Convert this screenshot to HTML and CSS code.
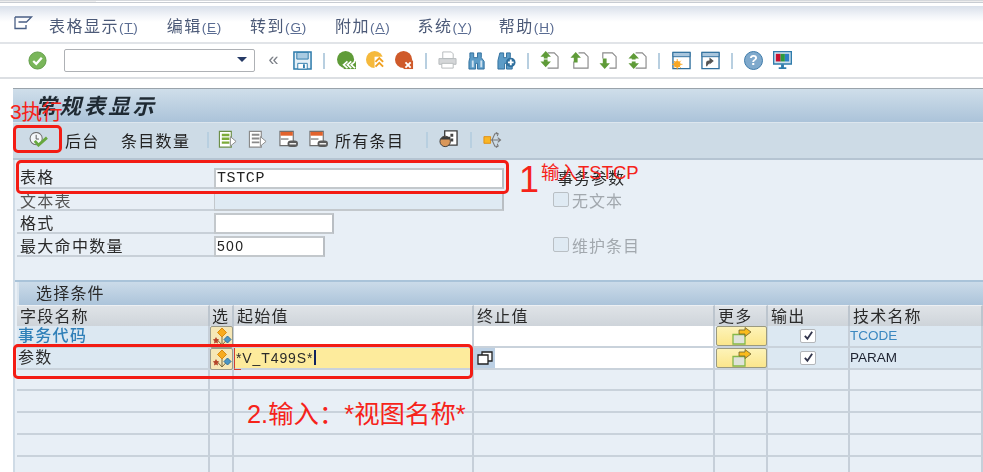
FILE: index.html
```html
<!DOCTYPE html>
<html lang="zh">
<head>
<meta charset="utf-8">
<title>常规表显示</title>
<link rel="stylesheet" href="styles.css">
</head>
<body>
<svg class="defs" width="0" height="0" aria-hidden="true">
  <symbol id="i-menu" viewBox="0 0 20 14"><path d="M1.500 1v11.500h11V9M1.500 1H18l-5 5H5" fill="none" stroke="#4a5f85" stroke-width="1.300"/></symbol>
  <symbol id="i-ok" viewBox="0 0 20 20"><circle cx="10" cy="10" r="9" fill="#79b65a" stroke="#5d9a43"/><path d="M5.500 10.500l3.200 3L14.500 7" fill="none" stroke="#fff" stroke-width="2.400"/></symbol>
  <symbol id="i-save" viewBox="0 0 20 20"><path d="M1 1h18v18H1z" fill="#e6f0f7" stroke="#2f7cac" stroke-width="1.600"/><path d="M4 1.500h12v7H4z" fill="#a9cbe2" stroke="#2f7cac"/><path d="M5 13h10v6H5z" fill="#fff" stroke="#2f7cac"/><path d="M11.500 14v4" stroke="#2f7cac" stroke-width="2"/></symbol>
  <symbol id="i-back" viewBox="0 0 20 20"><circle cx="9" cy="9" r="9" fill="#5f9b38"/><path d="M7 11h13v8H7z" fill="#5f9b38"/><path d="M11 11l-4 3.500 4 3.500M15 11l-4 3.500 4 3.500M19 11l-4 3.500 4 3.500" fill="none" stroke="#fff" stroke-width="1.800"/></symbol>
  <symbol id="i-up" viewBox="0 0 20 20"><circle cx="9" cy="9" r="9" fill="#f5b93c"/><path d="M9 6h10v13H9z" fill="#fff"/><path d="M10 11.500l4-4 4 4M10 16.500l4-4 4 4" fill="none" stroke="#f0a020" stroke-width="2"/></symbol>
  <symbol id="i-x" viewBox="0 0 20 20"><circle cx="9" cy="9" r="9" fill="#cf5a2a"/><path d="M9 10h10v9H9z" fill="#cf5a2a"/><path d="M11 12l5.500 5.500M16.500 12L11 17.500" stroke="#fff" stroke-width="2"/></symbol>
  <symbol id="i-print" viewBox="0 0 20 20"><path d="M5 1h9l2 2v5H5z" fill="#fff" stroke="#b6babd"/><path d="M1 8h18v6H1z" fill="#d4d6d8" stroke="#b6babd"/><path d="M4 13h12v5H4z" fill="#fff" stroke="#b6babd"/></symbol>
  <symbol id="i-find" viewBox="0 0 20 20"><path d="M3 2h4v5h4V2h4v5l3 4v8h-7v-6H9v6H2v-8l1-4z" transform="translate(-1 0)" fill="#5d9cc7" stroke="#2f6f9d"/><path d="M5 10v7M14 10v7" stroke="#cde1f0" stroke-width="2"/></symbol>
  <symbol id="i-findp" viewBox="0 0 20 20"><path d="M3 2h4v5h3V2h4v5l2 3v9h-6v-6H8v6H1v-9z" fill="#5d9cc7" stroke="#2f6f9d"/><circle cx="14.500" cy="12" r="5" fill="#2f6f9d"/><path d="M14.500 9v6M11.500 12h6" stroke="#fff" stroke-width="2"/></symbol>
  <symbol id="i-first" viewBox="0 0 20 20"><path d="M8 2h7l4 4v12H8" fill="#fff" stroke="#8a8a8a" stroke-width="1.200"/><path d="M6 0l5.500 6H8v2H4V6H.500z" fill="#5f9b38"/><path d="M6 17l5.500-6H8V9H4v2H.500z" fill="#5f9b38"/></symbol>
  <symbol id="i-prev" viewBox="0 0 20 20"><path d="M9 2h6l4 4v12H4v-7" fill="#fff" stroke="#8a8a8a" stroke-width="1.200"/><path d="M6 1l5.500 6H8v5H4V7H.500z" fill="#5f9b38"/></symbol>
  <symbol id="i-next" viewBox="0 0 20 20"><path d="M4 8V2h10l4 4v12h-7" fill="#fff" stroke="#8a8a8a" stroke-width="1.200"/><path d="M6 19l5.500-6H8V8H4v5H.500z" fill="#5f9b38"/></symbol>
  <symbol id="i-last" viewBox="0 0 20 20"><path d="M8 2h7l4 4v12H8" fill="#fff" stroke="#8a8a8a" stroke-width="1.200"/><path d="M6 2l5.500 6H8v1H4V8H.500z" fill="#5f9b38"/><path d="M6 19l5.500-6H8v-2H4v2H.500z" fill="#5f9b38"/></symbol>
  <symbol id="i-new" viewBox="0 0 20 20"><path d="M1 1.500h18v17H1z" fill="#fff" stroke="#2f6f9d" stroke-width="1.400"/><path d="M1 1.500h18V6H1z" fill="#a9c6dd" stroke="#2f6f9d"/><circle cx="5.500" cy="14" r="3.500" fill="#f9a825"/><path d="M5.500 8.500v11M0 14h11M1.800 10.300l7.400 7.400M9.200 10.300l-7.400 7.400" stroke="#f9a825"/></symbol>
  <symbol id="i-link" viewBox="0 0 20 20"><path d="M1 1.500h18v17H1z" fill="#fff" stroke="#2f6f9d" stroke-width="1.400"/><path d="M1 1.500h18V6H1z" fill="#a9c6dd" stroke="#2f6f9d"/><path d="M6 16v-3.500c0-1.500 1-2 2.500-2H11M9.500 8l3 2.500-3 2.500z" fill="#555" stroke="#555" stroke-width="1.200"/></symbol>
  <symbol id="i-mon" viewBox="0 0 20 20"><path d="M.700.700h18.600v13H.700z" fill="#cde0ee" stroke="#2f7cac" stroke-width="1.400"/><path d="M3 3h5v8H3z" fill="#c8102e"/><path d="M8 3h4.500v8H8z" fill="#2c9a3c"/><path d="M12.500 3H17v8h-4.500z" fill="#2c7fc4"/><path d="M8.500 14h3v3h-3zM6 17h8v2H6z" fill="#2f7cac"/></symbol>
  <symbol id="i-exec" viewBox="0 0 20 16"><circle cx="7.500" cy="7" r="6.500" fill="#f3f6f8" stroke="#6d6d6d" stroke-width="1.100"/><path d="M7.500 3v4.500h3" fill="none" stroke="#555"/><path d="M6 9.500l4 4.500L19 6" fill="none" stroke="#67a83d" stroke-width="3"/></symbol>
  <symbol id="i-selg" viewBox="0 0 20 20"><path d="M1.500 1.500H14V18H1.500z" fill="#fff" stroke="#8a8a8a" stroke-width="1.200"/><path d="M4 4h8v2H4zM4 8h8v2H4zM4 12h8v2H4z" fill="#8a8a8a"/><path d="M13 7l6 5-6 5z" fill="#fff" stroke="#8a8a8a"/></symbol>
  <symbol id="i-selc" viewBox="0 0 20 20"><path d="M1.500 1.500H14V18H1.500z" fill="#fff" stroke="#6d8f48" stroke-width="1.200"/><path d="M4 4h8v2.500H4zM4 8h8v2.500H4zM4 12h8v2.500H4z" fill="#7cab3a"/><path d="M13 7l6 5-6 5z" fill="#fff" stroke="#8a8a8a"/></symbol>
  <symbol id="i-rem" viewBox="0 0 20 20"><path d="M1 1.500h14v15H1z" fill="#fff" stroke="#6d6d6d" stroke-width="1.200"/><path d="M1.500 2h13v4h-13z" fill="#e2622c"/><path d="M2 9.500h8" stroke="#777" stroke-width="1.300"/><rect x="9" y="11" width="11" height="7" rx="3.500" fill="#5a5a5a"/><path d="M11 14.500h7" stroke="#fff" stroke-width="1.400"/></symbol>
  <symbol id="i-face" viewBox="0 0 20 20"><path d="M6 1h13v15H6z" fill="#fff" stroke="#3c3c3c" stroke-width="1.400"/><path d="M12 4h3v3h-3zM12 9h3v3h-3z" fill="#444"/><circle cx="6.500" cy="12" r="5.500" fill="#d9975a" stroke="#3c3c3c"/><path d="M1 10h11V7H4z" fill="#3c3c3c"/></symbol>
  <symbol id="i-tree" viewBox="0 0 20 20"><path d="M1 7h7v7H1z" fill="#f9b625" stroke="#e08e12"/><path d="M8 10.500h10M15.500 8l3 2.500-3 2.500M9.500 10.500l3-6.500h3M13.500 2.500l2.500 1.500-1 2.500M9.500 10.500l3 6.500h3M15 14.500l1 2.500-2.500 1.500" fill="none" stroke="#777" stroke-width="1.100"/></symbol>
  <symbol id="i-flower" viewBox="0 0 20 20"><path d="M10 18V8M4.500 12l5.500 6 5.500-6" fill="none" stroke="#7b6a3d"/><path d="M10 1l4.500 4.500L10 10 5.500 5.500z" fill="#f7ab1d" stroke="#d98a10"/><path d="M15.500 9l3.500 3.500-3.500 3.500-3.500-3.500z" fill="#4a96c4" stroke="#2f6f9d"/><path d="M4 10l1.100 2.100 2.100.400-1.600 1.600.400 2.300L4 15.400l-2 1 .400-2.300L.800 12.500l2.100-.400z" fill="#b4452a"/></symbol>
  <symbol id="i-more" viewBox="0 0 20 18"><path d="M1 7.500h12v9.500H1z" fill="#dfe3da" stroke="#86b84a" stroke-width="1.300"/><path d="M7 3h6V.500L19 5l-6 4.500V7H7z" fill="#f9bb1d" stroke="#6c6230" stroke-width=".800"/></symbol>
  <symbol id="i-multi" viewBox="0 0 16 14"><path d="M5 1h10v9H5z" fill="#fff" stroke="#222" stroke-width="1.300"/><path d="M1 4h10v9H1z" fill="#fff" stroke="#222" stroke-width="1.300"/></symbol>
  <symbol id="i-tick" viewBox="0 0 12 12"><path d="M2 6.500l2.800 3L10 2" fill="none" stroke="#33364d" stroke-width="2"/></symbol>
</svg>

<div class="top-strip"><span class="strip-tab"></span></div>

<nav class="menubar">
  <svg class="menu-icon"><use href="#i-menu"/></svg>
  <span class="menu-item m1">表格显示<small>(<u>T</u>)</small></span>
  <span class="menu-item m2">编辑<small>(<u>E</u>)</small></span>
  <span class="menu-item m3">转到<small>(<u>G</u>)</small></span>
  <span class="menu-item m4">附加<small>(<u>A</u>)</small></span>
  <span class="menu-item m5">系统<small>(<u>Y</u>)</small></span>
  <span class="menu-item m6">帮助<small>(<u>H</u>)</small></span>
</nav>

<div class="toolbar">
  <span class="tool"><svg class="ico"><use href="#i-ok"/></svg></span>
  <div class="combo"><span class="combo-arrow"></span></div>
  <span class="tool chev">«</span>
  <span class="tool"><svg class="ico"><use href="#i-save"/></svg></span>
  <span class="sep"></span>
  <span class="tool"><svg class="ico"><use href="#i-back"/></svg></span>
  <span class="tool"><svg class="ico"><use href="#i-up"/></svg></span>
  <span class="tool"><svg class="ico"><use href="#i-x"/></svg></span>
  <span class="sep"></span>
  <span class="tool"><svg class="ico"><use href="#i-print"/></svg></span>
  <span class="tool"><svg class="ico"><use href="#i-find"/></svg></span>
  <span class="tool"><svg class="ico"><use href="#i-findp"/></svg></span>
  <span class="sep"></span>
  <span class="tool"><svg class="ico"><use href="#i-first"/></svg></span>
  <span class="tool"><svg class="ico"><use href="#i-prev"/></svg></span>
  <span class="tool"><svg class="ico"><use href="#i-next"/></svg></span>
  <span class="tool"><svg class="ico"><use href="#i-last"/></svg></span>
  <span class="sep"></span>
  <span class="tool"><svg class="ico"><use href="#i-new"/></svg></span>
  <span class="tool"><svg class="ico"><use href="#i-link"/></svg></span>
  <span class="sep"></span>
  <span class="tool help">?</span>
  <span class="tool"><svg class="ico"><use href="#i-mon"/></svg></span>
</div>

<main class="panel">
  <header class="titlebar"><h1>常规表显示</h1></header>

  <div class="appbar">
    <span class="app-exec"><svg class="ico"><use href="#i-exec"/></svg></span>
    <span class="app-text a-bg">后台</span>
    <span class="app-text a-count">条目数量</span>
    <span class="sep a-sep1"></span>
    <span class="tool"><svg class="ico"><use href="#i-selc"/></svg></span>
    <span class="tool a-nar"><svg class="ico"><use href="#i-selg"/></svg></span>
    <span class="tool a-nar"><svg class="ico"><use href="#i-rem"/></svg></span>
    <span class="tool a-nar"><svg class="ico"><use href="#i-rem"/></svg></span>
    <span class="app-text a-all">所有条目</span>
    <span class="sep a-sep2"></span>
    <span class="tool"><svg class="ico"><use href="#i-face"/></svg></span>
    <span class="sep"></span>
    <span class="tool"><svg class="ico"><use href="#i-tree"/></svg></span>
  </div>

  <section class="form">
    <div class="form-left">
      <div class="form-row r1"><label>表格</label><div class="field f-wide mono">TSTCP</div></div>
      <div class="form-row r2"><label>文本表</label><div class="field f-wide f-off"></div></div>
      <div class="form-row r3"><label>格式</label><div class="field f-fmt"></div></div>
      <div class="form-row r4"><label>最大命中数量</label><div class="field f-max sans">500</div></div>
    </div>
    <div class="form-right">
      <div class="side-row side-title">事务参数</div>
      <div class="side-row off"><span class="box"></span>无文本</div>
      <div class="side-row"></div>
      <div class="side-row off"><span class="box"></span>维护条目</div>
    </div>
  </section>

  <section class="select">
    <h2>选择条件</h2>
    <div class="grid">
      <div class="hc">字段名称</div><div class="hc">选</div><div class="hc">起始值</div><div class="hc">终止值</div><div class="hc">更多</div><div class="hc">输出</div><div class="hc">技术名称</div>

      <div class="c c-key link">事务代码</div>
      <div class="c c-btn"><span class="sel-btn"><svg class="flower"><use href="#i-flower"/></svg></span></div>
      <div class="c c-white"></div>
      <div class="c c-white"></div>
      <div class="c c-btn"><span class="more-btn"><svg class="more"><use href="#i-more"/></svg></span></div>
      <div class="c c-key c-center"><span class="check"><svg class="tick"><use href="#i-tick"/></svg></span></div>
      <div class="c c-key tech link">TCODE</div>

      <div class="c c-key">参数</div>
      <div class="c c-btn"><span class="sel-btn"><svg class="flower"><use href="#i-flower"/></svg></span></div>
      <div class="c c-yellow">*V_T499S*<span class="caret"></span></div>
      <div class="c c-white c-multi"><span class="multi-btn"><svg class="multi"><use href="#i-multi"/></svg></span></div>
      <div class="c c-btn"><span class="more-btn"><svg class="more"><use href="#i-more"/></svg></span></div>
      <div class="c c-key c-center"><span class="check"><svg class="tick"><use href="#i-tick"/></svg></span></div>
      <div class="c c-key tech">PARAM</div>

      <div class="c"></div><div class="c"></div><div class="c"></div><div class="c"></div><div class="c"></div><div class="c"></div><div class="c"></div>
      <div class="c"></div><div class="c"></div><div class="c"></div><div class="c"></div><div class="c"></div><div class="c"></div><div class="c"></div>
      <div class="c"></div><div class="c"></div><div class="c"></div><div class="c"></div><div class="c"></div><div class="c"></div><div class="c"></div>
      <div class="c"></div><div class="c"></div><div class="c"></div><div class="c"></div><div class="c"></div><div class="c"></div><div class="c"></div>
      <div class="c"></div><div class="c"></div><div class="c"></div><div class="c"></div><div class="c"></div><div class="c"></div><div class="c"></div>
    </div>
  </section>
</main>

<div class="mark mark-exec"></div>
<div class="mark mark-table"></div>
<div class="mark mark-param"></div>
<span class="note note-3">3执行</span>
<span class="note note-1">1</span>
<span class="note note-1t">输入TSTCP</span>
<span class="note note-2">2.输入：*视图名称*</span>
</body>
</html>
```

FILE: styles.css
```css
* { box-sizing: border-box; }
html, body { margin: 0; padding: 0; }
body {
  position: relative;
  width: 983px;
  height: 472px;
  overflow: hidden;
  background: #fff;
  color: #2a2a2a;
  font-family: "Noto Sans CJK SC", "Liberation Sans", sans-serif;
  font-size: 16px;
}
.defs { position: absolute; }
.menubar, .toolbar, .panel { filter: blur(.35px); }

.top-strip { height: 6px; background: #fff; border-top: 1px solid #d5d8dc; position: relative; }
.strip-tab { display: block; height: 2px; background: linear-gradient(90deg, #eee 0 96px, #fff 96px 350px, #eee 350px); border-bottom: 1px solid #c8ccd2; }

.menubar {
  height: 38px;
  display: flex;
  align-items: center;
  padding-top: 3px;
  background: linear-gradient(#d9e0ea 0, #f3f5f9 10px, #fff 16px);
  border-bottom: 2px solid #e1e4e8;
  color: #4c5a78;
}
.menu-icon { width: 21px; height: 14px; margin-left: 13px; margin-top: -6px; }
.menu-item { letter-spacing: 1.500px; font-size: 16px; white-space: nowrap; line-height: 20px; margin-top: -1px; }
.menu-item small { font: 13.500px "Liberation Sans", sans-serif; letter-spacing: .8px; color: #5a6c92; }
.m1 { margin-left: 15px; }
.m2 { margin-left: 28px; }
.m3 { margin-left: 28px; }
.m4 { margin-left: 28px; }
.m5 { margin-left: 27px; }
.m6 { margin-left: 26px; }

.toolbar {
  height: 35px;
  padding: 0 0 0 22.500px;
  display: flex;
  align-items: center;
  background: #fff;
  border-bottom: 2px solid #dcdfe3;
}
.tool { width: 29.300px; height: 20px; flex: none; display: flex; align-items: center; justify-content: center; }
.ico { width: 19px; height: 19px; display: block; }
.chev { color: #7c8088; font: 18px/16px "Liberation Sans", sans-serif; padding-bottom: 3px; }
.help {
  font: bold 14px/17px "Liberation Sans", sans-serif;
  color: #fff;
  width: 19px;
  height: 19px;
  margin: 0 5px;
  border-radius: 50%;
  background: #7fa9cc;
  border: 1.500px solid #3f7cab;
}
.sep { width: 14px; height: 16px; flex: none; background: linear-gradient(#b8cfe0, #b8cfe0) center / 2px 100% no-repeat; }
.combo {
  width: 191px;
  height: 23px;
  margin-left: 12.500px;
  margin-right: 3.500px;
  flex: none;
  position: relative;
  background: #fff;
  border: 1.500px solid #aeb1b5;
  border-radius: 2px;
}
.combo-arrow {
  position: absolute;
  right: 7px;
  top: 7px;
  border: 5px solid transparent;
  border-top: 5px solid #263a66;
  border-bottom: 0;
  width: 0;
}

.panel { margin: 9px 0 0 13px; border-left: 2px solid #cfdbe6; background: #e8eff6; height: 384px; }
.titlebar {
  height: 34px;
  margin-left: -2px;
  background: linear-gradient(#cfdeea, #abc3d9);
  border-top: 1px solid #9aa3ab;
}
.titlebar h1 {
  margin: 0;
  padding: 0 0 0 22px;
  font-size: 21.500px;
  line-height: 32px;
  font-weight: 700;
  font-style: italic;
  color: #1f2a33;
  letter-spacing: 2.900px;
}
.appbar {
  height: 38px;
  margin-left: -2px;
  display: flex;
  align-items: center;
  background: #cddbe6;
  border-top: 1px solid #dde6ee;
  border-bottom: 2px solid #b5c4d2;
  padding-left: 16px;
  padding-bottom: 2px;
}
.app-exec { width: 19px; margin-right: 17px; }
.app-exec .ico { height: 15px; }
.appbar .tool { width: 29.500px; }
.app-text { letter-spacing: 1.300px; font-size: 16px; line-height: 20px; color: #222; white-space: nowrap; }
.a-bg { width: 56px; }
.a-count { width: 70px; }
.a-sep1 { margin-left: 10px; width: 14px; margin-right: -2px; }
.a-nar { width: 30.500px !important; }
.a-all { margin-left: 1px; width: 74px; }
.a-sep2 { margin-left: 11px; }

.form { height: 120px; display: flex; padding-left: 2px; }
.form-left { width: 488px; }
.form-row { display: flex; align-items: flex-end; }
.form-row label {
  width: 197px;
  height: 100%;
  padding-left: 3px;
  border-bottom: 2px solid #c8d0d8;
  font-size: 16px;
  letter-spacing: 1.300px;
  line-height: 19px;
  color: #2a2a2a;
  display: flex;
  align-items: flex-end;
}
.r1 { height: 29px; }
.r2 { height: 22px; }
.r3 { height: 23px; }
.r4 { height: 23px; }
.r1 label { padding-bottom: 1px; }
.r2 label { color: #555; line-height: 18px; }
.field {
  height: 21px;
  background: #fff;
  border: 2px solid #c3c8cc;
  border-right-color: #b9bec3;
  padding-left: 1px;
  line-height: 17px;
  color: #222;
}
.f-wide { width: 290px; }
.f-off { background: #dfeaf3; height: 18px; border-top: 0; border-left-width: 1px; }
.f-fmt { width: 120px; }
.f-max { width: 111px; }
.mono { font-family: "Liberation Mono", monospace; font-size: 15px; letter-spacing: .6px; }
.sans { font-family: "Liberation Sans", sans-serif; font-size: 14px; letter-spacing: 1.300px; }

.form-right { margin-left: 48px; padding-top: 6px; display: grid; grid-auto-rows: 22.500px; align-content: start; }
.side-row { display: flex; align-items: center; font-size: 16px; letter-spacing: 1px; line-height: 20px; color: #2a2a2a; white-space: nowrap; }
.side-title { padding-left: 4px; }
.off { color: #a2a8ae; }
.box { width: 16px; height: 15px; margin-right: 3px; background: #dfeaf3; border: 1.500px solid #b9bfc4; border-radius: 2px; flex: none; }

.select { border-top: 2px solid #a9c3d9; }
.select h2 {
  margin: 0 0 0 2px;
  height: 23px;
  padding-left: 17px;
  font-size: 16px;
  font-weight: 400;
  letter-spacing: 1.200px;
  line-height: 20px;
  color: #2a2a2a;
  background: linear-gradient(#cbdbe9, #acc4da);
  border-left: 2px solid #dbe5ee;
}
.grid {
  display: grid;
  grid-template-columns: 193px 24px 240px 241px 53px 82px 133px;
  grid-template-rows: 21px repeat(7, 21.750px);
  margin-left: 2px;
}
.hc {
  background: linear-gradient(#dfe3e7, #ced4da);
  border-right: 2px solid #bcc5ce;
  border-top: 1px solid #edf0f3;
  padding-left: 3px;
  font-size: 16px;
  letter-spacing: 1.200px;
  line-height: 18px;
  color: #2a2a2a;
  white-space: nowrap;
}
.hc:nth-child(2) { padding-left: 2px; letter-spacing: 0; }
.c {
  border-right: 2px solid #c6cfd9;
  border-bottom: 2px solid #c9d2db;
  min-width: 0;
  white-space: nowrap;
}
.c-key { background: #dce8f2; padding-left: 1px; font-size: 16px; letter-spacing: 1.300px; line-height: 17px; }
.c-white { background: #fff; }
.c-btn { padding: 0; }
.c-center { display: flex; justify-content: center; align-items: center; padding: 0; }
.link { color: #2f7fb8; font-weight: 500; }
.tech { font: 13.500px/20px "Liberation Sans", sans-serif; letter-spacing: 0; color: #1d2230; padding-left: 0; }
.tech.link { color: #3b88c0; font-weight: 400; }
.sel-btn {
  display: flex;
  align-items: center;
  justify-content: center;
  width: 23px;
  height: 22px;
  background: #f6e7b6;
  border: 1.500px solid #9a9a8a;
  border-radius: 2px;
}
.flower { width: 20px; height: 20px; }
.more-btn {
  display: flex;
  align-items: center;
  justify-content: center;
  width: 51px;
  height: 20px;
  margin-left: 1px;
  background: linear-gradient(#fdf3b8, #fbe68c);
  border: 1.500px solid #9a9a80;
  border-radius: 2px;
}
.more { width: 20px; height: 18px; }
.check { width: 16px; height: 14px; background: #fff; border: 1.500px solid #b3b6ba; border-radius: 2px; display: flex; align-items: center; justify-content: center; }
.tick { width: 11px; height: 11px; }
.c-yellow {
  position: relative;
  background: #fdeb9c;
  border-left: 1px solid #d04030;
  padding-left: 1px;
  font: 14px/20px "Liberation Sans", sans-serif;
  letter-spacing: .9px;
  color: #2a2a2a;
  display: flex;
  align-items: center;
}
.c-yellow::before {
  content: "";
  position: absolute;
  left: -1px;
  bottom: -2px;
  width: 7px;
  height: 1px;
  background: #d04030;
}
.caret { width: 2px; height: 15px; background: #12235e; margin-left: 1px; }
.c-multi { padding: 0; }
.multi-btn { display: flex; align-items: center; justify-content: center; width: 21px; height: 20px; background: #bcd0e4; }
.multi { width: 16px; height: 14px; }

.mark { position: absolute; border: 3px solid #f31c14; border-radius: 5px; pointer-events: none; }
.mark-exec { left: 13px; top: 125px; width: 49px; height: 28px; }
.mark-table { left: 16px; top: 160px; width: 493px; height: 34px; }
.mark-param { left: 13px; top: 344px; width: 460px; height: 35px; }
.note { position: absolute; color: #f6231a; font-family: "Liberation Sans", "Noto Sans CJK SC", sans-serif; white-space: nowrap; line-height: 1; }
.note-3 { left: 10px; top: 101px; font-size: 21px; letter-spacing: -.5px; }
.note-1 { left: 519px; top: 162px; font-size: 36px; }
.note-1t { left: 541px; top: 164px; font-size: 18.500px; }
.note-2 { left: 247px; top: 402px; font-size: 25.400px; }
```
